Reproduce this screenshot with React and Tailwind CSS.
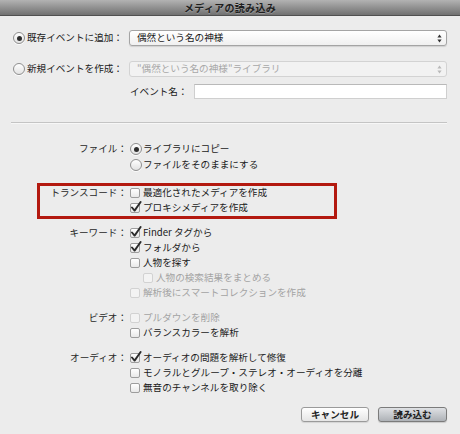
const FONT = "font-['Noto_Sans_CJK_JP','Noto_Sans',sans-serif]";

const Radio = ({ checked }) => (
  <span className="w-[12px] h-[12px] shrink-0 rounded-full border border-[#8f8f8f] bg-linear-to-b from-white to-[#e2e2e2] flex items-center justify-center shadow-[0_1px_0_rgba(255,255,255,0.8)]">
    {checked && <span className="w-[5px] h-[5px] rounded-full bg-[#2e2e2e]" />}
  </span>
);

const Check = ({ checked, disabled }) => (
  <span
    className={`relative w-[10px] h-[10px] shrink-0 rounded-[2px] border ${
      disabled
        ? "border-[#d2d2d2] bg-[#f3f3f3]"
        : "border-[#9d9d9d] bg-linear-to-b from-white to-[#e9e9e9]"
    }`}
  >
    {checked && (
      <svg
        className="absolute -left-[1px] -top-[3px]"
        width="12"
        height="12"
        viewBox="0 0 12 12"
      >
        <path
          d="M2 6.5 L4.6 9.6 L10.6 1"
          fill="none"
          stroke="#2b2b2b"
          strokeWidth="1.9"
          strokeLinecap="round"
          strokeLinejoin="round"
        />
      </svg>
    )}
  </span>
);

const Item = ({ type = "check", checked, disabled, indent, children, h = "h-[15px]" }) => (
  <div className={`flex items-center ${type === "radio" ? "gap-[1px]" : "gap-[3px]"} ${h} ${indent ? "pl-[13px]" : ""}`}>
    {type === "radio" ? <Radio checked={checked} /> : <Check checked={checked} disabled={disabled} />}
    <span className={`whitespace-nowrap ${disabled ? "text-[#a3a3a3]" : "text-[#1a1a1a]"}`}>
      {children}
    </span>
  </div>
);

const Section = ({ label, className = "", children, rowH = "h-[15px]", extra }) => (
  <div className={`relative grid grid-cols-[127px_1fr] ${className}`}>
    <div className={`text-right text-[#262626] ${rowH} flex items-center justify-end whitespace-nowrap`}>
      {label}
    </div>
    <div className="pl-[3px]">{children}</div>
    {extra}
  </div>
);

const Stepper = ({ light }) => (
  <svg width="5" height="9" viewBox="0 0 5 9" className="mr-[4px]">
    <path d="M2.5 0.5 L4.6 3.4 L0.4 3.4 Z" fill={light ? "#b9b9b9" : "#333"} />
    <path d="M2.5 8.5 L4.6 5.6 L0.4 5.6 Z" fill={light ? "#b9b9b9" : "#333"} />
  </svg>
);

export default function App() {
  return (
    <div className={`w-[460px] h-[434px] bg-[#ececec] flex flex-col text-[9.6px] leading-none ${FONT}`}>
      {/* title bar */}
      <div className="h-[16px] shrink-0 bg-linear-to-b from-[#b3b3b3] to-[#717171] border-b border-[#505050] flex items-center justify-center">
        <span className="text-[10px] font-bold text-[#1f1f1f] tracking-[0.3px] [text-shadow:0_1px_0_rgba(255,255,255,0.25)]">
          メディアの読み込み
        </span>
      </div>

      {/* event choice */}
      <div className="mt-[14px] flex flex-col">
        <div className="flex items-center h-[16px]">
          <div className="w-[129px] pl-[13px] flex items-center gap-[2px] text-[#1a1a1a] whitespace-nowrap">
            <Radio checked />
            <span>既存イベントに追加：</span>
          </div>
          <div className="w-[318px] h-[16px] rounded-[3px] border border-[#a4a4a4] bg-linear-to-b from-white to-[#f0f0f0] shadow-[0_1px_1px_rgba(0,0,0,0.12)] flex items-center justify-between pl-[7px]">
            <span className="text-[#1a1a1a]">偶然という名の神様</span>
            <Stepper />
          </div>
        </div>
        <div className="flex items-center h-[16px] mt-[15px]">
          <div className="w-[129px] pl-[13px] flex items-center gap-[2px] text-[#1a1a1a] whitespace-nowrap">
            <Radio />
            <span>新規イベントを作成：</span>
          </div>
          <div className="w-[318px] h-[16px] rounded-[3px] border border-[#d3d3d3] bg-[#f2f2f2] flex items-center justify-between pl-[7px]">
            <span className="text-[#a8a8a8]">"偶然という名の神様"ライブラリ</span>
            <Stepper light />
          </div>
        </div>
        <div className="flex items-center h-[15px] mt-[7px]">
          <div className="w-[194px] pl-[130px] text-[#1a1a1a] whitespace-nowrap">イベント名：</div>
          <div className="w-[253px] h-[15px] bg-white border border-[#cfcfcf] border-t-[#b9b9b9]" />
        </div>
      </div>

      <div className="mt-[23px] mx-[11px] w-[436px] h-px bg-[#c4c4c4] shadow-[0_1px_0_#f7f7f7]" />

      <Section label="ファイル：" className="mt-[18px]" rowH="h-[16px]">
        <Item type="radio" checked h="h-[16px]">ライブラリにコピー</Item>
        <Item type="radio" h="h-[16px]">ファイルをそのままにする</Item>
      </Section>

      <Section
        label="トランスコード："
        className="mt-[12px]"
        extra={
          <div className="absolute left-[37px] -top-[2px] w-[300px] h-[36px] border-[3px] border-[#b3190f] pointer-events-none" />
        }
      >
        <Item>最適化されたメディアを作成</Item>
        <Item checked>プロキシメディアを作成</Item>
      </Section>

      <Section label="キーワード：" className="mt-[10px]">
        <Item checked>Finder タグから</Item>
        <Item checked>フォルダから</Item>
        <Item>人物を探す</Item>
        <Item indent disabled>人物の検索結果をまとめる</Item>
        <Item disabled>解析後にスマートコレクションを作成</Item>
      </Section>

      <Section label="ビデオ：" className="mt-[10px]">
        <Item disabled>プルダウンを削除</Item>
        <Item>バランスカラーを解析</Item>
      </Section>

      <Section label="オーディオ：" className="mt-[10px]">
        <Item checked>オーディオの問題を解析して修復</Item>
        <Item>モノラルとグループ・ステレオ・オーディオを分離</Item>
        <Item>無音のチャンネルを取り除く</Item>
      </Section>

      <div className="mt-[12px] flex justify-end gap-[9px] pr-[13px]">
        <button className="w-[68px] h-[15px] rounded-[3px] border border-[#9a9a9a] bg-linear-to-b from-white to-[#e6e6e6] shadow-[0_1px_1px_rgba(0,0,0,0.1)] text-[#222] font-bold flex items-center justify-center">
          キャンセル
        </button>
        <button className="w-[69px] h-[15px] rounded-[3px] border border-[#7b7b7b] bg-linear-to-b from-[#dfe1e4] to-[#aeb2b7] shadow-[0_1px_1px_rgba(0,0,0,0.15)] text-[#222] font-bold flex items-center justify-center">
          読み込む
        </button>
      </div>
    </div>
  );
}
